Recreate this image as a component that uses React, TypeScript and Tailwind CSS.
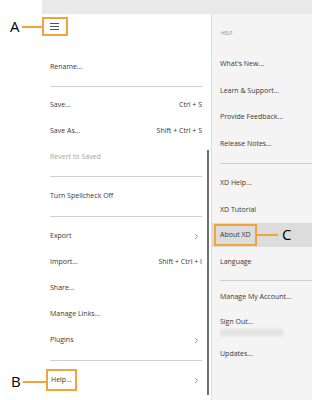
import { ChevronRight } from "lucide-react";

type Item =
  | { kind: "item"; label: string; shortcut?: string; sub?: boolean; dim?: boolean }
  | { kind: "sep"; h: string };

const fileMenu: Item[] = [
  { kind: "item", label: "Rename..." },
  { kind: "sep", h: "h-[12px]" },
  { kind: "item", label: "Save...", shortcut: "Ctrl + S" },
  { kind: "item", label: "Save As...", shortcut: "Shift + Ctrl + S" },
  { kind: "item", label: "Revert to Saved", dim: true },
  { kind: "sep", h: "h-[13px]" },
  { kind: "item", label: "Turn Spellcheck Off" },
  { kind: "sep", h: "h-[14px]" },
  { kind: "item", label: "Export", sub: true },
  { kind: "item", label: "Import...", shortcut: "Shift + Ctrl + I" },
  { kind: "item", label: "Share..." },
  { kind: "item", label: "Manage Links..." },
  { kind: "item", label: "Plugins", sub: true },
  { kind: "sep", h: "h-[14px]" },
];

const helpTop = ["What's New...", "Learn & Support...", "Provide Feedback...", "Release Notes..."];

function Sep({ h }: { h: string }) {
  return (
    <div className={`flex ${h} items-center`}>
      <div className="h-px w-full bg-[#cfcfcf]" />
    </div>
  );
}

function Callout({ letter }: { letter: string }) {
  return <span className="text-[15px] leading-none text-black">{letter}</span>;
}

export default function App() {
  return (
    <div
      className="relative flex h-[400px] w-[312px] flex-col overflow-hidden bg-white text-[#383838]"
      style={{ fontFamily: '"Open Sans", "Noto Sans", sans-serif' }}
    >
      {/* top strip */}
      <div className="flex h-[14px] shrink-0">
        <div className="w-[42px]" />
        <div className="flex-1 bg-[#e9e9e9]" />
      </div>

      <div className="flex flex-1">
        {/* File menu */}
        <div className="relative flex w-[211px] shrink-0 flex-col pl-[50px] pr-[9px]">
          <div className="h-[40px]" />
          {fileMenu.map((it, i) =>
            it.kind === "sep" ? (
              <Sep key={i} h={it.h} />
            ) : (
              <div key={i} className="flex h-[26px] items-center justify-between text-[7px]">
                <span className={it.dim ? "text-[#a5a5a5]" : ""}>{it.label}</span>
                {it.shortcut && <span>{it.shortcut}</span>}
                {it.sub && <ChevronRight className="mr-[1px] h-[9px] w-[9px] text-[#444]" strokeWidth={1.5} />}
              </div>
            )
          )}
          <div className="flex h-[26px] items-center justify-between text-[7px]">
            <span className="-ml-[4px] border-2 border-[#f2a33a] px-[3px] py-[4px]">Help...</span>
            <ChevronRight className="mr-[1px] h-[9px] w-[9px] text-[#444]" strokeWidth={1.5} />
          </div>
          {/* scroll thumb */}
          <div className="absolute right-[2px] top-[136px] h-[245px] w-[2px] bg-[#6f6f6f]" />
        </div>

        {/* Help submenu */}
        <div className="flex flex-1 flex-col border-l border-[#dedede] bg-[#f4f4f4] text-[7px]">
          <div className="flex h-[37px] items-center pl-[9px] pt-[2px] text-[4.5px] tracking-wide text-[#8a8a8a]">
            HELP
          </div>
          {helpTop.map((t) => (
            <div key={t} className="flex h-[26.5px] items-center pl-[8px]">
              {t}
            </div>
          ))}
          <div className="flex h-[13px] items-center pl-[8px]">
            <div className="h-px w-full bg-[#cfcfcf]" />
          </div>
          <div className="flex h-[26.5px] items-center pl-[8px]">XD Help...</div>
          <div className="flex h-[26.5px] items-center pl-[8px]">XD Tutorial</div>
          <div className="flex h-[24px] items-center bg-[#dcdcdc] pl-[2px]">
            <span className="border-2 border-[#f2a33a] px-[4px] py-[4px]">About XD</span>
          </div>
          <div className="flex h-[28px] items-center pl-[8px] pt-[2px]">Language</div>
          <div className="flex h-[10px] items-center pl-[8px]">
            <div className="h-px w-full bg-[#cfcfcf]" />
          </div>
          <div className="flex h-[24px] items-center pl-[8px]">Manage My Account...</div>
          <div className="flex flex-col pl-[8px] pt-[8px]">
            <span className="leading-[10px]">Sign Out...</span>
            <div className="mt-[2px] h-[7px] w-[64px] rounded-sm bg-[#e3e3e3] blur-[1px]" />
          </div>
          <div className="flex h-[30px] items-center pl-[8px] pt-[6px]">Updates...</div>
        </div>
      </div>

      {/* hamburger callout A */}
      <div className="absolute left-[10px] top-[17px] flex items-center">
        <Callout letter="A" />
        <div className="ml-[2px] h-[2px] w-[20px] bg-[#f2a33a]" />
        <div className="flex h-[19px] w-[26px] items-center justify-center border-2 border-[#f2a33a]">
          <div className="flex w-[9px] flex-col gap-[2px]">
            <div className="h-px bg-[#555]" />
            <div className="h-px bg-[#555]" />
            <div className="h-px bg-[#555]" />
          </div>
        </div>
      </div>

      {/* callout B */}
      <div className="absolute left-[11px] top-[374px] flex items-center">
        <Callout letter="B" />
        <div className="ml-[2px] h-[2px] w-[25px] bg-[#f2a33a]" />
      </div>

      {/* callout C */}
      <div className="absolute left-[256px] top-[227px] flex items-center">
        <div className="mr-[4px] h-[2px] w-[22px] bg-[#f2a33a]" />
        <Callout letter="C" />
      </div>
    </div>
  );
}
